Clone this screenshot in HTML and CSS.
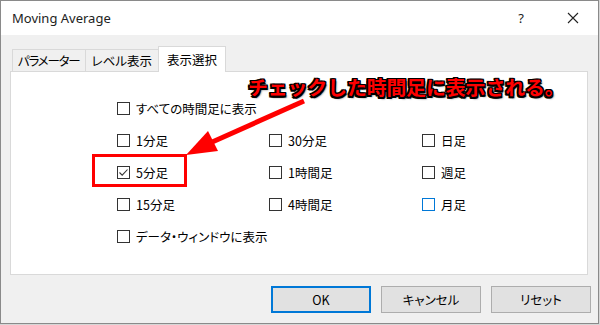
FILE: index.html
```html
<!DOCTYPE html>
<html lang="ja">
<head>
    <meta charset="UTF-8">
    <title>Moving Average</title>
    <link rel="stylesheet" href="styles.css">
</head>
<body>
    <div class="window">
        <div class="titlebar">
            <span class="title">Moving Average</span>
            <span class="help">?</span>
            <span class="close">
                <svg width="12" height="12" viewBox="0 0 12 12"><path d="M1 1 L11 11 M11 1 L1 11" stroke="#222" stroke-width="1.1" fill="none"/></svg>
            </span>
        </div>

        <div class="body">
            <div class="tabs">
                <div class="tab narrow">パラメーター</div>
                <div class="tab">レベル表示</div>
                <div class="tab active">表示選択</div>
            </div>

            <div class="panel">
                <div class="grid">
                    <label class="check wide"><span class="box"></span>すべての時間足に表示</label>

                    <label class="check"><span class="box"></span>1分足</label>
                    <label class="check"><span class="box"></span>30分足</label>
                    <label class="check"><span class="box"></span>日足</label>

                    <label class="check"><span class="box"><svg width="11" height="11" viewBox="0 0 11 11"><polyline points="1.5,5.5 4.2,8.2 9.5,2.5" stroke="#333" stroke-width="1.1" fill="none"/></svg></span>5分足</label>
                    <label class="check"><span class="box"></span>1時間足</label>
                    <label class="check"><span class="box"></span>週足</label>

                    <label class="check"><span class="box"></span>15分足</label>
                    <label class="check"><span class="box"></span>4時間足</label>
                    <label class="check"><span class="box hover"></span>月足</label>

                    <label class="check wide"><span class="box"></span>データ・ウィンドウに表示</label>
                </div>
            </div>

            <div class="buttons">
                <button class="btn default">OK</button>
                <button class="btn">キャンセル</button>
                <button class="btn">リセット</button>
            </div>
        </div>

        <!-- annotation drawn over the dialog -->
        <svg class="arrow" width="600" height="325" viewBox="0 0 600 325">
            <line x1="304" y1="101" x2="210" y2="143" stroke="#ff0000" stroke-width="5"/>
            <polygon points="186,155 218,151 208,131" fill="#ff0000"/>
        </svg>
        <div class="highlight"></div>
        <div class="callout">チェックした時間足に表示される。</div>
    </div>
</body>
</html>
```

FILE: styles.css
```css
/* General */
body {
    margin: 0;
    background: #d6d6d6;
    font-family: "Noto Sans CJK JP", "Noto Sans", sans-serif;
    font-size: 12.5px;
    color: #000;
}

.window {
    position: relative;
    box-sizing: border-box;
    width: 599px;
    height: 324px;
    border: 1px solid #8a8a8a;
    background: #f0f0f0;
    overflow: hidden;
}

/* Title bar */
.titlebar {
    height: 34px;
    background: #fff;
    display: flex;
    align-items: center;
    padding-left: 11px;
}

.title {
    font-family: "Noto Sans", sans-serif;
    font-size: 13px;
    color: #222;
}

.help {
    margin-left: auto;
    width: 10px;
    text-align: center;
    font-family: "Noto Sans", sans-serif;
    font-size: 13px;
    color: #222;
}

.close {
    display: flex;
    margin-left: 41px;
    margin-right: 19px;
}

/* Body */
.body {
    padding: 11px 10px 0 9px;
}

.tabs {
    display: flex;
    align-items: flex-end;
    height: 25px;
    padding-left: 2px;
}

.tab {
    box-sizing: border-box;
    height: 22px;
    padding: 0 6px;
    border: 1px solid #d9d9d9;
    border-bottom: none;
    margin-right: -1px;
    background: #f0f0f0;
    display: flex;
    align-items: center;
    font-feature-settings: "palt";
    white-space: nowrap;
}

.tab.narrow {
    padding: 0 5px;
    letter-spacing: -1.2px;
}

.tab.active {
    position: relative;
    z-index: 1;
    height: 26px;
    margin-bottom: -1px;
    padding: 0 8px;
    background: #fff;
}

.panel {
    box-sizing: border-box;
    height: 204px;
    background: #fff;
    border: 1px solid #d9d9d9;
}

.grid {
    display: grid;
    grid-template-columns: 152px 153px 1fr;
    grid-auto-rows: 32px;
    padding: 20px 0 0 106px;
}

.check {
    display: flex;
    align-items: center;
    font-feature-settings: "palt";
    white-space: nowrap;
}

.check.wide {
    grid-column: 1 / -1;
}

.box {
    box-sizing: border-box;
    width: 13px;
    height: 13px;
    border: 1px solid #333;
    margin-right: 6px;
    display: flex;
    align-items: center;
    justify-content: center;
}

.box.hover {
    border-color: #0078d7;
}

/* Buttons */
.buttons {
    display: flex;
    justify-content: flex-end;
    gap: 10px;
    margin-top: 11px;
    margin-right: -3px;
}

.btn {
    box-sizing: border-box;
    width: 100px;
    height: 27px;
    background: #e1e1e1;
    border: 1px solid #adadad;
    font-family: "Noto Sans CJK JP", sans-serif;
    font-size: 12.5px;
    font-feature-settings: "palt";
    color: #000;
    padding: 0;
}

.btn.default {
    border: 2px solid #0078d7;
}

/* Annotation */
.arrow {
    position: absolute;
    left: -1px;
    top: -1px;
}

.highlight {
    position: absolute;
    left: 91px;
    top: 153px;
    width: 95px;
    height: 33px;
    box-sizing: border-box;
    border: 3px solid #ff0000;
}

.callout {
    position: absolute;
    left: 247px;
    top: 74px;
    font-size: 19.8px;
    font-weight: 700;
    line-height: 24px;
    color: #ff0000;
    white-space: nowrap;
    text-shadow:
        -1.5px -1.5px 0 #000, 1.5px -1.5px 0 #000,
        -1.5px 1.5px 0 #000, 1.5px 1.5px 0 #000,
        0 -1.5px 0 #000, 0 1.5px 0 #000,
        -1.5px 0 0 #000, 1.5px 0 0 #000,
        2px 2px 2px rgba(0, 0, 0, 0.6);
}
```
